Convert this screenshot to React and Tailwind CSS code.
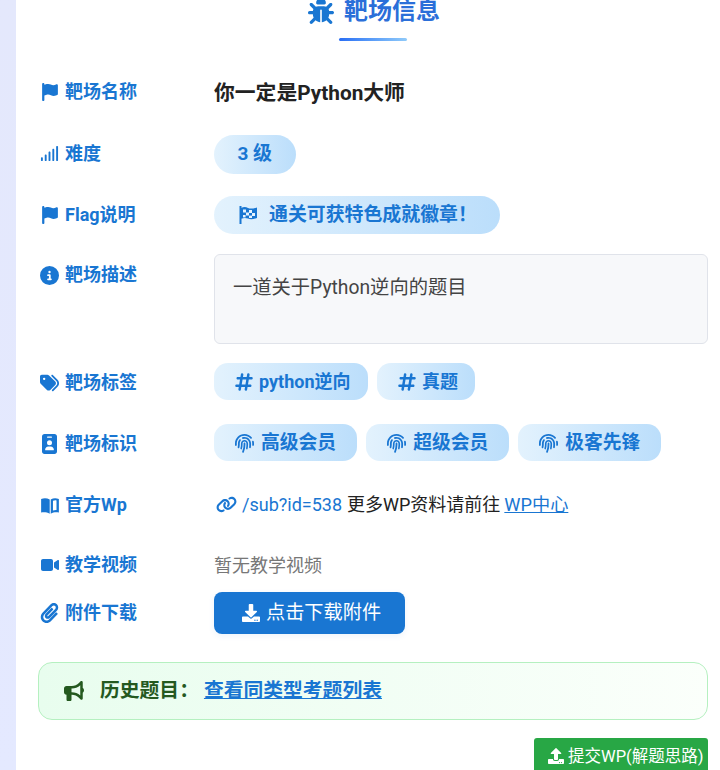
import React from "react";
import {
  FaBug, FaFlag, FaSignal, FaCircleInfo, FaTags, FaHashtag,
  FaFingerprint, FaIdBadge, FaLink, FaVideo, FaBullhorn,
} from "react-icons/fa6";
import { FaPaperclip, FaDownload, FaUpload } from "react-icons/fa";

const font = { fontFamily: '"Roboto","Noto Sans CJK SC",sans-serif' };

function BookIcon() {
  return (
    <svg width="18" height="17" viewBox="0 0 24 23" fill="currentColor">
      <path d="M0 2.6C4 1 8 1.2 11.6 3.4V22.6C8 20.6 4 20.4 0 21Z" />
      <path fillRule="evenodd" d="M13 3.4C16.4 1.2 20 1 24 2.6V21C20 20.4 16.4 20.6 13 22.6ZM16 5.2V18.4C17.4 17.8 19.2 17.6 20.8 17.7V4.6C19 4.3 17.4 4.5 16 5.2Z" />
    </svg>
  );
}

function CheckerFlag({ className = "" }) {
  return (
    <svg width="18" height="18" viewBox="0 0 18 18" className={className}>
      <rect x="0.5" y="0" width="2" height="18" fill="#1976d2" />
      <path d="M2 2C5 0.6 7 1 9 2C11.5 3 14 2.6 18 1.4V12C14 13.4 11.5 13.6 9 12.6C7 11.8 5 11.6 2 12.8Z" fill="#1976d2" />
      <g fill="#e6f3fe">
        <rect x="4" y="3.5" width="3" height="3" />
        <rect x="10" y="4" width="3" height="3" />
        <rect x="7" y="6.5" width="3" height="3" />
        <rect x="13" y="7" width="3" height="3" />
        <rect x="4" y="9" width="2.6" height="2.4" />
        <rect x="10" y="9.6" width="3" height="2.4" />
      </g>
    </svg>
  );
}

function Row({ icon: Icon, label, className = "", children, labelClass = "", iconSize = "text-[18px]" }) {
  return (
    <div className={`flex ${className}`}>
      <div className={`w-[176px] shrink-0 pl-[2px] flex items-center gap-[6px] text-[18px] font-bold text-[#1976d2] leading-[24px] ${labelClass}`}>
        <span className={`w-[19px] flex justify-center ${iconSize}`}><Icon /></span>
        <span>{label}</span>
      </div>
      <div className="flex-1 min-w-0 flex flex-wrap items-center">{children}</div>
    </div>
  );
}

function Pill({ icon: Icon, children, className = "", iconClass = "" }) {
  return (
    <span className={`inline-flex items-center font-bold text-[#1976d2] bg-gradient-to-r from-[#e3f2fd] to-[#bbdefb] ${className}`}>
      {Icon && <Icon className={iconClass} />}
      {children}
    </span>
  );
}

export default function App() {
  return (
    <div className="h-[770px] w-[720px] overflow-hidden flex bg-white" style={font}>
      <div className="w-[16px] shrink-0 bg-gradient-to-b from-[#e4e8fc] to-[#e4e9ff]" />
      <div className="flex-1 pl-[22px] pr-[12px] -mt-[6px]">
        <div className="flex flex-col items-center h-[52px]">
          <div className="flex items-center gap-[10px] text-[24px] font-bold leading-[34px] text-[#2b6fd9] ml-[2px]">
            <FaBug className="text-[#1976d2] text-[26px]" />
            <span>靶场信息</span>
          </div>
          <div className="mt-[10px] w-[68px] h-[3px] rounded-[2px] bg-gradient-to-r from-[#2a6df4] to-[#90caf9]" />
        </div>

        <Row icon={FaFlag} label="靶场名称" className="mt-[29px] h-[40px]" labelClass="-mt-[6px]">
          <span className="text-[20.8px] font-bold text-[#222] pb-[2px]">你一定是Python大师</span>
        </Row>

        <Row icon={FaSignal} iconSize="text-[19px]" label="难度" className="mt-[20px] h-[39px]" labelClass="-mt-[2px]">
          <Pill className="h-[39px] px-[23.5px] rounded-[20px] text-[19px]">3 级</Pill>
        </Row>

        <Row icon={FaFlag} label="Flag说明" className="mt-[22px] h-[38px]" labelClass="-mt-[1px]">
          <Pill icon={CheckerFlag} iconClass="mr-[12px]" className="h-[38px] w-[286px] pl-[25px] rounded-[19px] text-[18.9px]">通关可获特色成就徽章！</Pill>
        </Row>

        <div className="flex mt-[20px]">
          <div className="w-[176px] shrink-0 pl-[2px] pt-[9px] flex items-start gap-[6px] text-[18px] font-bold text-[#1976d2] leading-[24px]">
            <span className="w-[19px] h-[24px] flex items-center justify-center text-[19px]"><FaCircleInfo /></span>
            <span>靶场描述</span>
          </div>
          <div className="flex-1 h-[90px] rounded-[6px] border border-[#e0e3ea] bg-[#f7f8fa] px-[18px] pt-[19px] text-[19.3px] leading-[28px] text-[#444]">
            一道关于Python逆向的题目
          </div>
        </div>

        <Row icon={FaTags} iconSize="text-[20px]" label="靶场标签" className="mt-[19px] h-[37px]" labelClass="mt-[3px]">
          <div className="flex gap-[9px]">
            <Pill icon={FaHashtag} iconClass="mr-[5px] text-[20px]" className="h-[37px] pl-[20px] pr-[17px] rounded-[14px] text-[18px]">python逆向</Pill>
            <Pill icon={FaHashtag} iconClass="mr-[5.5px] text-[20px]" className="h-[37px] pl-[20px] pr-[17px] rounded-[14px] text-[18px]">真题</Pill>
          </div>
        </Row>

        <Row icon={FaIdBadge} iconSize="text-[20px]" label="靶场标识" className="mt-[24px] h-[37px]" labelClass="mt-[2px]">
          <div className="flex gap-[9px]">
            {["高级会员", "超级会员", "极客先锋"].map((t) => (
              <Pill key={t} icon={FaFingerprint} iconClass="mr-[7px] text-[19px]" className="h-[37px] pl-[21px] pr-[21px] pt-[2px] rounded-[14px] text-[18.8px] text-[#1e6fc7]">{t}</Pill>
            ))}
          </div>
        </Row>

        <Row icon={BookIcon} label="官方Wp" className="mt-[30px] h-[28px]">
          <div className="flex items-center text-[18px] pb-[2px]">
            <FaLink className="text-[#1976d2] text-[21px] mr-[5px] ml-[2px]" />
            <a className="text-[#1976d2]">/sub?id=538</a>
            <span className="ml-[5px] text-[#222]">更多WP资料请前往 </span>
            <a className="ml-[4px] text-[#1976d2] underline text-[18.2px]">WP中心</a>
          </div>
        </Row>

        <Row icon={FaVideo} label="教学视频" className="mt-[32px] h-[28px]">
          <span className="text-[18px] text-[#777]">暂无教学视频</span>
        </Row>

        <Row icon={FaPaperclip} iconSize="text-[20px]" label="附件下载" className="mt-[13px] h-[42px]">
          <span className="inline-flex items-center justify-start pl-[28px] w-[191px] h-[42px] rounded-[8px] bg-[#1976d2] text-white text-[19.2px] shadow-[0_2px_6px_rgba(25,118,210,0.08)]">
            <FaDownload className="mr-[6px] text-[18px]" />点击下载附件
          </span>
        </Row>

        <div className="mt-[28px] h-[58px] rounded-[14px] border border-[#b5f0c0] bg-gradient-to-r from-[#e8fdee] to-[#fbfffb] flex items-center pl-[25px] text-[19.8px] font-bold text-[#24591f]">
          <FaBullhorn className="text-[20px] mr-[16px]" />
          <span>历史题目：</span>
          <a className="text-[#1976d2] underline ml-[5px]">查看同类型考题列表</a>
        </div>

        <div className="flex justify-end mt-[18px]">
          <span className="inline-flex items-start pt-[7px] pl-[14px] w-[174px] h-[40px] rounded-[3px] bg-[#28a745] text-white text-[16.5px] leading-[24px]">
            <FaUpload className="mr-[4px] mt-[3px] text-[16px]" />提交WP(解题思路)
          </span>
        </div>
      </div>
    </div>
  );
}
